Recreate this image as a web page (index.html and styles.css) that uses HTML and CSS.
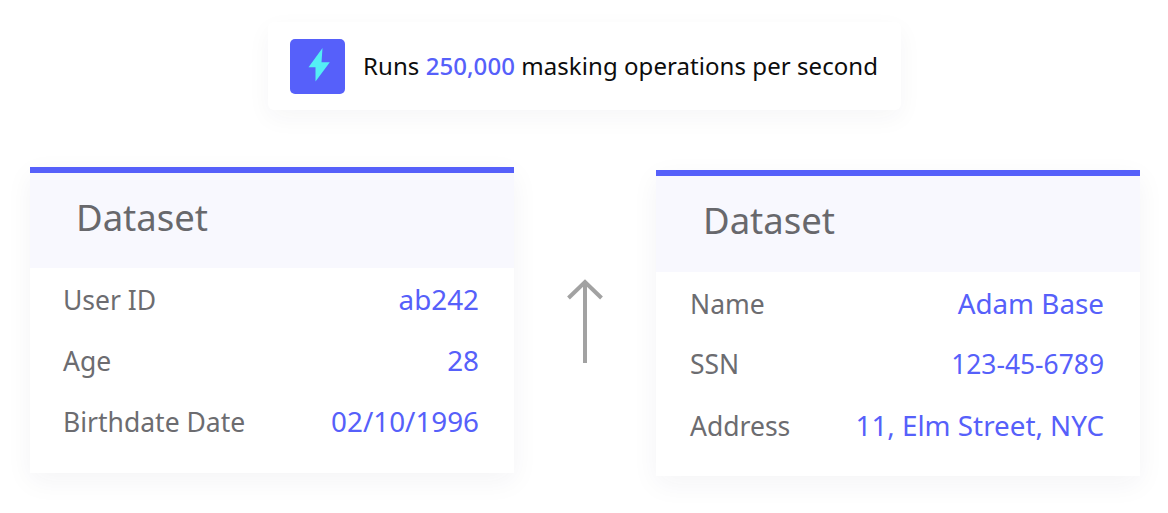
FILE: index.html
```html
<!DOCTYPE html>
<html lang="en">
<head>
<meta charset="utf-8">
<title>Masking</title>
<link rel="stylesheet" href="styles.css">
</head>
<body>
<main class="page">
  <div class="banner">
    <div class="bolt">
      <svg width="24" height="36" viewBox="0 0 24 36"><path class="bolt-path" d="M16.500 0 2.500 19.200H9.500V33.500L23.800 14.200H15.500Z"/></svg>
    </div>
    <p class="banner-text">Runs <span class="hl">250,000</span> masking operations per second</p>
  </div>
  <div class="cards">
    <section class="card card-left">
      <h2 class="card-title">Dataset</h2>
      <div class="rows">
        <div class="row"><span>User ID</span><span class="val">ab242</span></div>
        <div class="row"><span>Age</span><span class="val">28</span></div>
        <div class="row"><span>Birthdate Date</span><span class="val">02/10/1996</span></div>
      </div>
    </section>
    <div class="arrow">
      <svg width="38" height="84" viewBox="0 0 38 84"><path class="arrow-path" d="M19 84V3M2.500 19 19 3l16.500 16"/></svg>
    </div>
    <section class="card card-right">
      <h2 class="card-title">Dataset</h2>
      <div class="rows">
        <div class="row"><span>Name</span><span class="val">Adam Base</span></div>
        <div class="row"><span>SSN</span><span class="val val-small">123-45-6789</span></div>
        <div class="row"><span>Address</span><span class="val">11, Elm Street, NYC</span></div>
      </div>
    </section>
  </div>
</main>
</body>
</html>
```
FILE: styles.css
```css
* { box-sizing: border-box; }
html, body { margin: 0; background: #fff; }
body { width: 1168px; height: 513px; overflow: hidden; font-family: "Noto Sans", sans-serif; }
.page { display: flex; flex-direction: column; align-items: center; padding-top: 22px; }
.banner {
  width: 633px; height: 88px; margin-left: 1px;
  display: flex; align-items: center; gap: 18px; padding-left: 22px;
  background: #fff; border-radius: 6px;
  box-shadow: 0 8px 24px rgba(40, 40, 80, 0.045);
}
.bolt {
  width: 55px; height: 55px; border-radius: 5px; background: #5660fa;
  display: flex; align-items: center; justify-content: center;
}
.bolt-path { fill: #54eef5; }
.banner-text { margin: 0 0 2px; font-size: 24px; color: #0d0d0d; white-space: nowrap; letter-spacing: 0.06px; }
.hl { color: #5660fa; font-weight: 500; }
.cards { display: grid; grid-template-columns: 484px 142px 484px; width: 1110px; margin: 57px 0 0 2px; align-items: start; }
.card { height: 306px; background: #fff; border-top: 6px solid #5660fa; box-shadow: 0 8px 26px rgba(40, 40, 80, 0.05); }
.card-right { margin-top: 3px; }
.card-title {
  margin: 0; height: 95px; padding: 0 0 7px 47px; display: flex; align-items: center;
  background: #f8f8fe; font-size: 36.500px; font-weight: 400; color: #68686c;
}
.card-left .card-title { padding-left: 46px; }
.card-right .card-title { height: 96px; padding-bottom: 9px; }
.rows { padding: 1px 36px 0 34px; }
.card-left .rows { padding: 1px 35px 0 33px; }
.row { display: flex; justify-content: space-between; align-items: baseline; height: 61px; line-height: 61px; font-size: 26.500px; color: #6c6c70; }
.val { color: #5660fa; font-size: 27.800px; }
.val-small { font-size: 26.400px; }
.arrow { display: flex; justify-content: center; padding-top: 112px; }
.arrow-path { fill: none; stroke: #a2a2a2; stroke-width: 4; stroke-linejoin: miter; }
```
